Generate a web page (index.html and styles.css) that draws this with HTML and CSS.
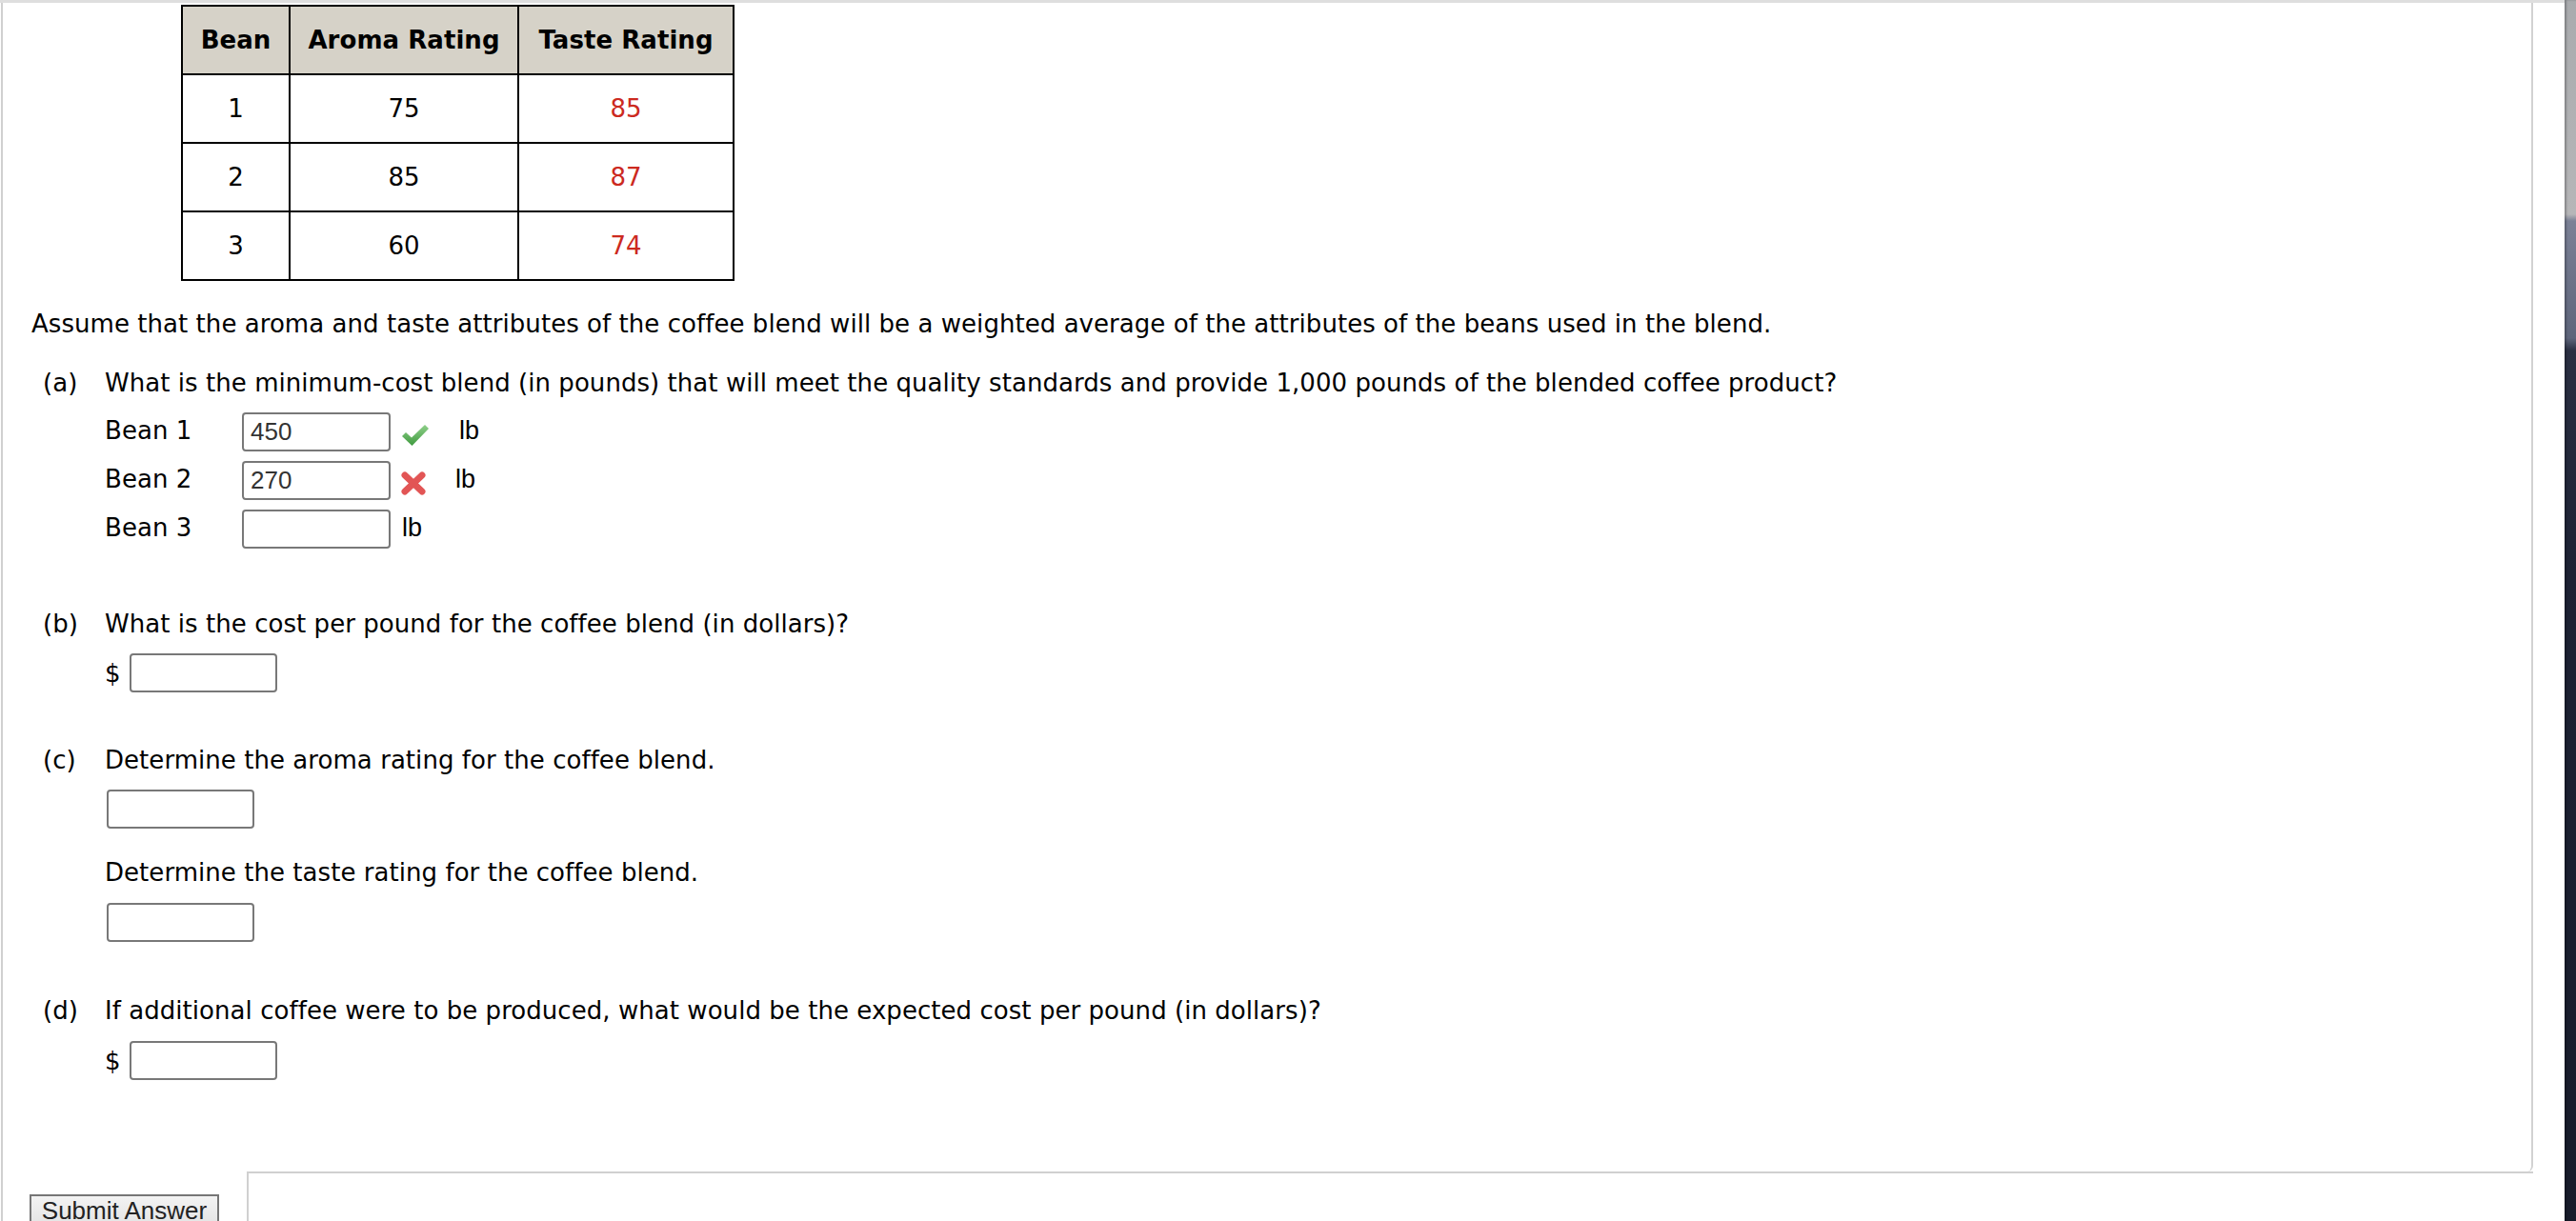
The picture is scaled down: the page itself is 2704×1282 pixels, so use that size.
FILE: index.html
```html
<!DOCTYPE html>
<html>
<head>
<meta charset="utf-8">
<title>Coffee blend</title>
<link rel="stylesheet" href="styles.css">
</head>
<body>
<div class="screen">
  <div class="page">
    <div class="frame">
      <div class="qbody">
        <table class="ratings">
          <colgroup><col class="c1"><col class="c2"><col class="c3"></colgroup>
          <thead>
            <tr><th>Bean</th><th>Aroma Rating</th><th>Taste Rating</th></tr>
          </thead>
          <tbody>
            <tr><td>1</td><td>75</td><td class="red">85</td></tr>
            <tr><td>2</td><td>85</td><td class="red">87</td></tr>
            <tr><td>3</td><td>60</td><td class="red">74</td></tr>
          </tbody>
        </table>

        <p class="intro">Assume that the aroma and taste attributes of the coffee blend will be a weighted average of the attributes of the beans used in the blend.</p>

        <div class="part part-a">
          <span class="tag">(a)</span>
          <div class="pbody">
            <p class="q">What is the minimum-cost blend (in pounds) that will meet the quality standards and provide 1,000 pounds of the blended coffee product?</p>
            <div class="bean-row first">
              <span class="bean-label">Bean 1</span>
              <input class="answer" type="text" value="450" readonly>
              <svg class="mark" width="30" height="25" viewBox="0 0 30 25">
                <defs>
                  <linearGradient id="gchk" x1="0" y1="0" x2="0" y2="1">
                    <stop offset="0" stop-color="#8fd08a"/>
                    <stop offset="1" stop-color="#3f9a3f"/>
                  </linearGradient>
                </defs>
                <path d="M1 14 L5 10 L11 15.5 L25 2 L29 6 L11.5 24 Z" fill="url(#gchk)"/>
              </svg>
              <span class="unit">lb</span>
            </div>
            <div class="bean-row">
              <span class="bean-label">Bean 2</span>
              <input class="answer" type="text" value="270" readonly>
              <svg class="mark" width="26" height="25" viewBox="0 0 26 25">
                <path d="M4 4 L22 21 M22 4 L4 21" stroke="#e25555" stroke-width="7" stroke-linecap="round" fill="none"/>
              </svg>
              <span class="unit">lb</span>
            </div>
            <div class="bean-row">
              <span class="bean-label">Bean 3</span>
              <input class="answer" type="text" value="" readonly>
              <span class="unit">lb</span>
            </div>
          </div>
        </div>

        <div class="part part-b">
          <span class="tag">(b)</span>
          <div class="pbody">
            <p class="q">What is the cost per pound for the coffee blend (in dollars)?</p>
            <div class="money-row">
              <span class="dollar">$</span>
              <input class="answer small" type="text" value="" readonly>
            </div>
          </div>
        </div>

        <div class="part part-c">
          <span class="tag">(c)</span>
          <div class="pbody">
            <p class="q">Determine the aroma rating for the coffee blend.</p>
            <div class="plain-row">
              <input class="answer small" type="text" value="" readonly>
            </div>
            <p class="q q2">Determine the taste rating for the coffee blend.</p>
            <div class="plain-row second">
              <input class="answer small" type="text" value="" readonly>
            </div>
          </div>
        </div>

        <div class="part part-d">
          <span class="tag">(d)</span>
          <div class="pbody">
            <p class="q">If additional coffee were to be produced, what would be the expected cost per pound (in dollars)?</p>
            <div class="money-row last">
              <span class="dollar">$</span>
              <input class="answer small" type="text" value="" readonly>
            </div>
          </div>
        </div>
      </div>

      <div class="footer">
        <button class="submit" type="button">Submit Answer</button>
        <div class="feedback"></div>
      </div>
    </div>
  </div>
  <div class="desktop"></div>
</div>
</body>
</html>
```

FILE: styles.css
```css
html, body {
  margin: 0;
  padding: 0;
  background: #ffffff;
}

.screen {
  display: flex;
  width: 2704px;
  height: 1282px;
  overflow: hidden;
}

.page {
  flex: 1;
  display: flex;
  flex-direction: column;
  border-top: 3px solid #dedede;
  padding-right: 33px;
  background: #ffffff;
}

.frame {
  flex: 1;
  display: flex;
  flex-direction: column;
  margin-left: 1px;
  border-left: 2px solid #d0d0d0;
  min-height: 0;
}

.qbody {
  flex: 1;
  border-right: 2px solid #d2d2d2;
  border-bottom-right-radius: 6px;
  padding-left: 30px;
  font-family: "DejaVu Sans", Verdana, sans-serif;
  font-size: 26px;
  letter-spacing: 0.05px;
  color: #000;
  min-height: 0;
  overflow: hidden;
}

/* table */
.ratings {
  border-collapse: collapse;
  table-layout: fixed;
  width: 579px;
  margin: 2px 0 0 157px;
  font-size: 26px;
}
.ratings .c1 { width: 113px; }
.ratings .c2 { width: 240px; }
.ratings .c3 { width: 226px; }

.ratings th,
.ratings td {
  border: 2px solid #000;
  height: 70px;
  padding: 0;
  text-align: center;
  vertical-align: middle;
}
.ratings th {
  background: #d6d2c8;
  font-weight: bold;
}
.ratings .red { color: #cc2a1f; }

/* text blocks */
.intro {
  margin: 27px 0 0 0;
  line-height: 36px;
}

.part {
  display: grid;
  grid-template-columns: 65px 1fr;
  padding-left: 12px;
}
.tag {
  line-height: 36px;
}
.q {
  margin: 0;
  line-height: 36px;
}
.part-a { margin-top: 26px; }
.part-b { margin-top: 61px; }
.part-c { margin-top: 53px; }
.part-d { margin-top: 54px; }

.bean-row {
  display: flex;
  align-items: center;
  height: 41px;
  margin-top: 10px;
}
.bean-row.first { margin-top: 13px; }
.bean-row .bean-label { margin-top: -3px; }

.bean-label {
  width: 144px;
  flex: none;
}

.answer {
  box-sizing: border-box;
  width: 156px;
  height: 41px;
  margin: 0;
  border: 2px solid #787878;
  border-radius: 4px;
  padding: 0 7px;
  font-family: "Liberation Sans", Arial, sans-serif;
  font-size: 26px;
  color: #333;
  background: #fff;
  outline: none;
  flex: none;
}
.answer.small { width: 155px; }

.mark {
  flex: none;
  margin-left: 11px;
  margin-right: 19px;
  margin-top: 6px;
}

.unit {
  margin-left: 12px;
  margin-top: -2px;
  font-family: "Liberation Sans", Arial, sans-serif;
  font-size: 27px;
}

.money-row {
  display: flex;
  align-items: center;
  margin-top: 13px;
  height: 41px;
}
.money-row.last { margin-top: 14px; }
.dollar {
  width: 26px;
  flex: none;
}

.plain-row {
  display: flex;
  margin-top: 13px;
  height: 41px;
}
.plain-row.second { margin-top: 14px; }
.plain-row .answer { margin-left: 2px; }
.q2 { margin-top: 28px; }

/* footer */
.footer {
  flex: none;
  height: 52px;
  display: flex;
  align-items: flex-start;
}
.submit {
  flex: none;
  box-sizing: border-box;
  width: 199px;
  height: 50px;
  margin: 24px 0 0 28px;
  padding: 0;
  border: 2px solid #767676;
  background: linear-gradient(#f3f3f3, #dcdcdc);
  font-family: "Liberation Sans", Arial, sans-serif;
  font-size: 26px;
  color: #222;
  line-height: 30px;
  text-align: center;
  display: flex;
  align-items: flex-start;
  justify-content: center;
}
.feedback {
  flex: 1;
  margin-left: 29px;
  height: 60px;
  border-top: 2px solid #d0d0d0;
  border-left: 2px solid #d0d0d0;
}

/* desktop strip on the right edge */
.desktop {
  width: 12px;
  flex: none;
  background: linear-gradient(#a9abae 0, #b6b6b8 225px, #7b8196 232px, #5e657b 355px, #2a2f42 368px, #1d2234 600px, #171b2a 100%);
  box-shadow: inset 2px 0 2px rgba(0,0,0,0.25);
}
```
